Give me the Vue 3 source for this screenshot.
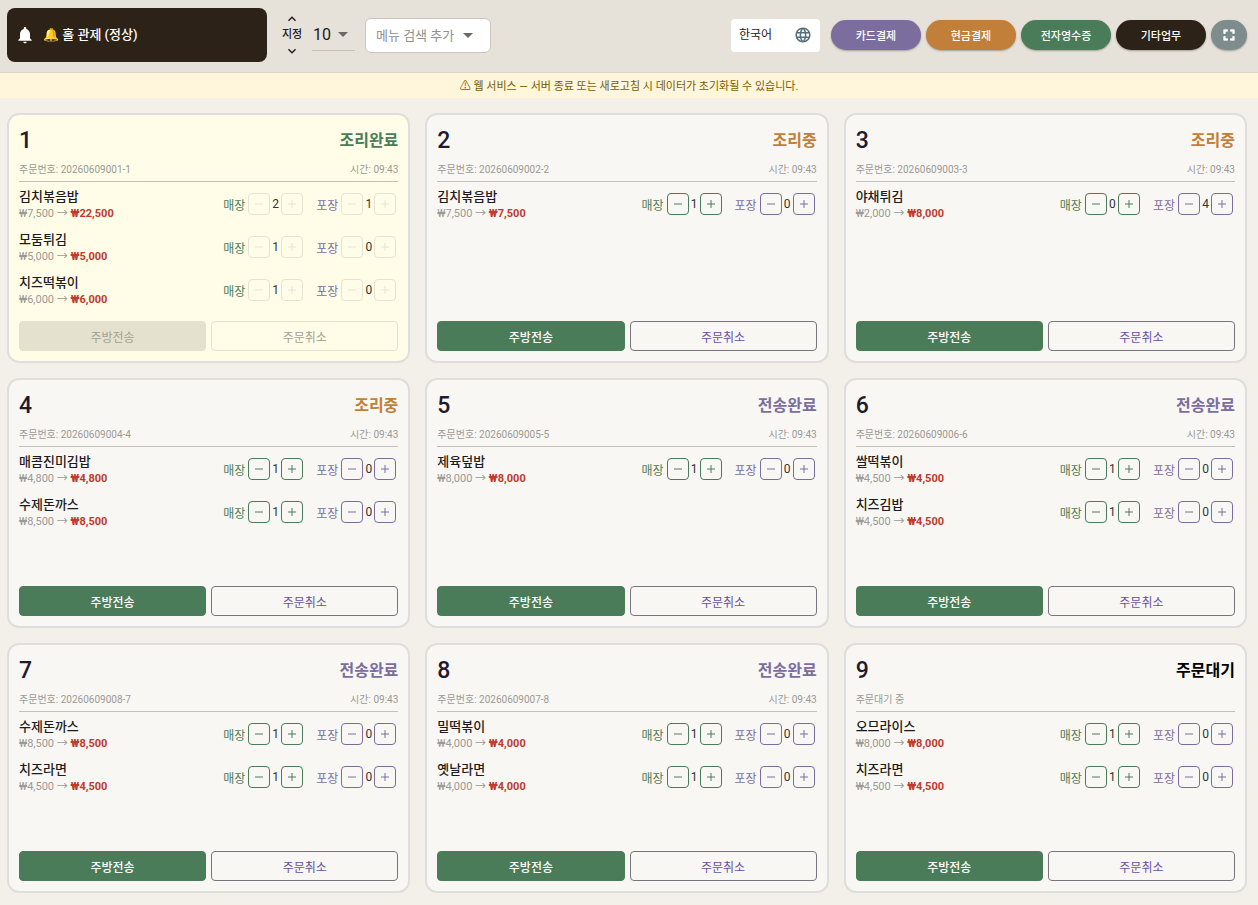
<template>
    <div class="hall-page">
        <header class="top-bar">
            <div class="hall-status">
                <svg class="bell" viewBox="0 0 24 24" aria-hidden="true">
                    <path d="M12 22c1.1 0 2-.9 2-2h-4c0 1.100.9 2 2 2zm6-6v-5c0-3.070-1.640-5.640-4.500-6.320V4c0-.830-.670-1.500-1.500-1.500s-1.500.670-1.500 1.500v.680C7.630 5.360 6 7.920 6 11v5l-2 2v1h16v-1l-2-2z" />
                </svg>
                <h1>🔔 홀 관제 (정상)</h1>
            </div>
            <div class="slot-control">
                <button type="button" aria-label="늘리기" @click="moveSlot(1)">
                    <svg viewBox="0 0 24 24"><path d="M12 8l-6 6 1.410 1.410L12 10.830l4.590 4.580L18 14z" /></svg>
                </button>
                <label for="slotCount">지정</label>
                <button type="button" aria-label="줄이기" @click="moveSlot(-1)">
                    <svg viewBox="0 0 24 24"><path d="M16.590 8.590L12 13.170 7.410 8.590 6 10l6 6 6-6z" /></svg>
                </button>
            </div>
            <div class="select-box slot-select">
                <select id="slotCount" v-model.number="slotCount">
                    <option v-for="n in 20" :key="n" :value="n">{{ n }}</option>
                </select>
                <svg class="caret" viewBox="0 0 10 5"><path d="M0 0h10L5 5z" /></svg>
            </div>
            <div class="select-box menu-select">
                <select v-model="selectedMenu" aria-label="메뉴 검색 추가">
                    <option value="">메뉴 검색 추가</option>
                    <option v-for="name in menuNames" :key="name" :value="name">{{ name }}</option>
                </select>
                <svg class="caret" viewBox="0 0 10 5"><path d="M0 0h10L5 5z" /></svg>
            </div>
            <div class="actions">
                <div class="select-box lang-select">
                    <select v-model="language" aria-label="한국어">
                        <option value="ko">한국어</option>
                        <option value="en">English</option>
                    </select>
                    <svg class="globe" viewBox="0 0 24 24">
                        <path d="M11.990 2C6.470 2 2 6.480 2 12s4.470 10 9.990 10C17.520 22 22 17.520 22 12S17.520 2 11.990 2zm6.930 6h-2.950c-.320-1.250-.780-2.450-1.380-3.560 1.840.630 3.370 1.910 4.330 3.560zM12 4.040c.830 1.200 1.480 2.530 1.910 3.960h-3.820c.430-1.430 1.080-2.760 1.910-3.960zM4.260 14C4.100 13.360 4 12.690 4 12s.100-1.360.260-2h3.380c-.080.660-.140 1.320-.140 2s.060 1.340.140 2H4.260zm.820 2h2.950c.320 1.250.780 2.450 1.380 3.560-1.840-.630-3.370-1.900-4.330-3.560zm2.950-8H5.080c.960-1.660 2.490-2.930 4.330-3.560C8.810 5.550 8.350 6.750 8.030 8zM12 19.960c-.830-1.200-1.480-2.530-1.910-3.960h3.820c-.430 1.430-1.080 2.760-1.910 3.960zM14.340 14H9.660c-.090-.660-.160-1.320-.160-2s.070-1.350.160-2h4.680c.090.650.160 1.320.160 2s-.070 1.340-.160 2zm.250 5.560c.600-1.110 1.060-2.310 1.380-3.560h2.950c-.960 1.650-2.490 2.930-4.330 3.560zM16.360 14c.080-.660.140-1.320.140-2s-.060-1.340-.140-2h3.380c.160.640.260 1.310.260 2s-.100 1.360-.260 2h-3.380z" />
                    </svg>
                </div>
                <button type="button" class="pill card-pay">카드결제</button>
                <button type="button" class="pill cash-pay">현금결제</button>
                <button type="button" class="pill receipt">전자영수증</button>
                <button type="button" class="pill etc">기타업무</button>
                <button type="button" class="pill full" aria-label="전체 화면">
                    <svg viewBox="0 0 24 24">
                        <path d="M7 14H5v5h5v-2H7v-3zm-2-4h2V7h3V5H5v5zm12 7h-3v2h5v-5h-2v3zM14 5v2h3v3h2V5h-5z" />
                    </svg>
                </button>
            </div>
        </header>

        <p class="notice">⚠ 웹 서비스 — 서버 종료 또는 새로고침 시 데이터가 초기화될 수 있습니다.</p>

        <main class="order-grid">
            <section v-for="order in orders" :key="order.id" class="order-card" :class="order.status">
                <div class="card-title">
                    <h2>{{ order.id }}</h2>
                    <strong class="status">{{ statusText[order.status] }}</strong>
                </div>
                <div class="card-info">
                    <span>{{ order.no ? '주문번호: ' + order.no : '주문대기 중' }}</span>
                    <span v-if="order.no">시간: 09:43</span>
                </div>
                <ul class="item-list">
                    <li v-for="item in order.items" :key="item.name">
                        <div class="item-text">
                            <div class="item-name">{{ item.name }}</div>
                            <div class="item-price">
                                {{ won(item.price) }} → <b>{{ won(item.price * (item.hall + item.pack)) }}</b>
                            </div>
                        </div>
                        <div v-for="kind in kinds" :key="kind.key" class="counter" :class="kind.key">
                            <span class="counter-label">{{ kind.label }}</span>
                            <button
                                type="button"
                                :aria-label="kind.label + ' 빼기'"
                                :disabled="order.status === 'done'"
                                @click="change(item, kind.key, -1)"
                            >
                                <svg viewBox="0 0 12 12"><path d="M2 6h8" /></svg>
                            </button>
                            <span class="count">{{ item[kind.key] }}</span>
                            <button
                                type="button"
                                :aria-label="kind.label + ' 더하기'"
                                :disabled="order.status === 'done'"
                                @click="change(item, kind.key, 1)"
                            >
                                <svg viewBox="0 0 12 12"><path d="M2 6h8M6 2v8" /></svg>
                            </button>
                        </div>
                    </li>
                </ul>
                <div class="card-buttons">
                    <button type="button" class="send" :disabled="order.status === 'done'">주방전송</button>
                    <button type="button" class="cancel" :disabled="order.status === 'done'">주문취소</button>
                </div>
            </section>
        </main>
    </div>
</template>

<script setup>
import { ref, computed } from 'vue';

const slotCount = ref(10);
const selectedMenu = ref('');
const language = ref('ko');

const statusText = {
    done: '조리완료',
    cooking: '조리중',
    sent: '전송완료',
    waiting: '주문대기',
};

const kinds = [
    { key: 'hall', label: '매장' },
    { key: 'pack', label: '포장' },
];

const makeItem = (name, price, hall = 1, pack = 0) => ({ name, price, hall, pack });

const orders = ref([
    {
        id: 1,
        no: '20260609001-1',
        status: 'done',
        items: [makeItem('김치볶음밥', 7500, 2, 1), makeItem('모둠튀김', 5000), makeItem('치즈떡볶이', 6000)],
    },
    { id: 2, no: '20260609002-2', status: 'cooking', items: [makeItem('김치볶음밥', 7500)] },
    { id: 3, no: '20260609003-3', status: 'cooking', items: [makeItem('야채튀김', 2000, 0, 4)] },
    {
        id: 4,
        no: '20260609004-4',
        status: 'cooking',
        items: [makeItem('매콤진미김밥', 4800), makeItem('수제돈까스', 8500)],
    },
    { id: 5, no: '20260609005-5', status: 'sent', items: [makeItem('제육덮밥', 8000)] },
    { id: 6, no: '20260609006-6', status: 'sent', items: [makeItem('쌀떡볶이', 4500), makeItem('치즈김밥', 4500)] },
    { id: 7, no: '20260609008-7', status: 'sent', items: [makeItem('수제돈까스', 8500), makeItem('치즈라면', 4500)] },
    { id: 8, no: '20260609007-8', status: 'sent', items: [makeItem('밀떡볶이', 4000), makeItem('옛날라면', 4000)] },
    { id: 9, no: '', status: 'waiting', items: [makeItem('오므라이스', 8000), makeItem('치즈라면', 4500)] },
]);

const menuNames = computed(() => [...new Set(orders.value.flatMap((order) => order.items.map((item) => item.name)))]);

const won = (value) => '₩' + value.toLocaleString('en-US');

const change = (item, key, step) => {
    item[key] = Math.max(0, item[key] + step);
};

const moveSlot = (step) => {
    slotCount.value = Math.min(20, Math.max(1, slotCount.value + step));
};
</script>

<style>
body {
    margin: 0;
    background: #f3f0e9;
}
</style>

<style scoped>
.hall-page {
    min-height: 100vh;
    font-family: Roboto, 'Noto Sans CJK KR', sans-serif;
    color: #1d1b20;
}

h1,
h2,
p,
ul {
    margin: 0;
    padding: 0;
}

button,
select {
    font-family: inherit;
    cursor: pointer;
}

button {
    padding: 0;
    display: flex;
    align-items: center;
    justify-content: center;
}

button:disabled {
    cursor: default;
}

/* 상단 바 */
.top-bar {
    display: flex;
    align-items: center;
    padding: 8px 11px 10px 7px;
    background: #e6e2d9;
    border-bottom: 1px solid #dcd5c8;
}

.hall-status {
    box-sizing: border-box;
    width: 260px;
    height: 54px;
    padding: 0 8px;
    display: flex;
    align-items: center;
    gap: 8px;
    background: #2c2218;
    border-radius: 8px;
    color: #fff;
}

.bell {
    width: 20px;
    height: 20px;
    fill: #fff;
}

.hall-status h1 {
    font-size: 13px;
    line-height: 20px;
    font-weight: 500;
}

.slot-control {
    width: 24px;
    margin-left: 13px;
    display: flex;
    flex-direction: column;
    align-items: center;
}

.slot-control button {
    width: 24px;
    height: 16px;
    border: none;
    background: none;
}

.slot-control svg {
    width: 16px;
    height: 16px;
    fill: #1d1b20;
}

.slot-control label {
    font-size: 11px;
    line-height: 16px;
    font-weight: 500;
    white-space: nowrap;
}

.select-box {
    position: relative;
    box-sizing: border-box;
}

.select-box select {
    appearance: none;
    box-sizing: border-box;
    width: 100%;
    height: 100%;
    margin: 0;
    padding: 0;
    border: none;
    background: transparent;
    color: #1d1b20;
    outline: none;
}

.select-box svg {
    position: absolute;
    top: 0;
    bottom: 0;
    margin: auto 0;
    pointer-events: none;
}

.caret {
    width: 10px;
    height: 5px;
    fill: #6b6963;
}

.slot-select {
    width: 43px;
    height: 32px;
    margin-left: 8px;
    border-bottom: 1px solid #c6c2bb;
}

.slot-select select {
    padding-left: 1px;
    font-size: 16px;
}

.slot-select .caret {
    right: 7px;
}

.menu-select {
    width: 126px;
    height: 35px;
    margin-left: 10px;
    background: #fff;
    border: 1px solid #c9c5bc;
    border-radius: 6px;
}

.menu-select select {
    padding-left: 10px;
    font-size: 13px;
    color: #8f8f8f;
}

.menu-select .caret {
    right: 17px;
}

.actions {
    margin-left: auto;
    display: flex;
    align-items: center;
    gap: 5px;
}

.lang-select {
    width: 89px;
    height: 33px;
    margin-right: 6px;
    background: #fff;
    border-radius: 4px;
}

.lang-select select {
    padding-left: 8px;
    font-size: 12px;
}

.globe {
    right: 8px;
    width: 18px;
    height: 18px;
    fill: #546e7a;
}

.pill {
    width: 90px;
    height: 30px;
    border: none;
    border-radius: 15px;
    box-shadow: 0 1px 2px rgba(0, 0, 0, 0.3);
    color: #fff;
    font-size: 11px;
    font-weight: 500;
}

.card-pay {
    background: #7b6e9e;
}

.cash-pay {
    background: #c17f3a;
}

.receipt {
    background: #4a7c59;
}

.etc {
    background: #2c2218;
}

.full {
    width: 36px;
    background: #7f8c8d;
}

.full svg {
    width: 18px;
    height: 18px;
    fill: #fff;
    stroke: #fff;
}

.notice {
    padding: 5px 16px 3px;
    background: #fff6db;
    color: #7a5c00;
    font-size: 11px;
    line-height: 17px;
    text-align: center;
}

/* 주문 카드 */
.order-grid {
    display: grid;
    grid-template-columns: repeat(3, 1fr);
    gap: 15px;
    padding: 15px 11px 12px 7px;
}

.order-card {
    box-sizing: border-box;
    min-height: 250px;
    padding: 10px;
    display: flex;
    flex-direction: column;
    background: #f9f7f3;
    border: 2px solid #dfdedc;
    border-radius: 12px;
}

.order-card.done {
    background: #fffde7;
}

.card-title {
    display: flex;
    justify-content: space-between;
    align-items: center;
    height: 32px;
}

.card-title h2 {
    font-size: 23px;
    font-weight: 500;
    line-height: 32px;
    color: #1f1a2e;
}

.status {
    font-size: 16px;
    line-height: 30px;
    font-weight: 700;
    color: #000;
}

.done .status {
    color: #4a7c59;
}

.cooking .status {
    color: #c17f3a;
}

.sent .status {
    color: #7b6e9e;
}

.card-info {
    display: flex;
    justify-content: space-between;
    padding: 5px 0 3px;
    border-bottom: 1px solid #c3c1be;
    font-size: 10px;
    line-height: 16px;
    color: #9a9a96;
}

.item-list {
    flex: 1;
    padding-top: 5px;
    list-style: none;
}

.item-list li {
    display: flex;
    align-items: center;
    gap: 13px;
    height: 34px;
    margin-bottom: 9px;
    padding-right: 2px;
}

.item-text {
    flex: 1;
}

.item-name {
    font-size: 13px;
    line-height: 20px;
    font-weight: 500;
}

.item-price {
    font-size: 11px;
    line-height: 14px;
    color: #9a9a96;
}

.item-price b {
    color: #c0392b;
}

.counter {
    display: flex;
    align-items: center;
}

.counter-label {
    margin-right: 3px;
    font-size: 12px;
}

.counter button {
    width: 22px;
    height: 22px;
    border: 1px solid currentColor;
    border-radius: 4px;
    background: none;
    color: inherit;
}

.counter svg {
    width: 12px;
    height: 12px;
    fill: none;
    stroke: currentColor;
}

.counter button:disabled {
    color: #e6e3d5;
}

.hall {
    color: #4a7c59;
}

.pack {
    color: #7b6e9e;
}

.count {
    width: 11px;
    font-size: 12px;
    text-align: center;
    color: #333;
}

.card-buttons {
    display: flex;
    gap: 5px;
}

.card-buttons button {
    flex: 1;
    box-sizing: border-box;
    height: 30px;
    border: 1px solid transparent;
    border-radius: 4px;
    font-size: 12px;
}

.card-buttons .send {
    background: #4a7c59;
    border-color: #4a7c59;
    color: #fff;
    font-weight: 500;
}

.card-buttons .cancel {
    background: none;
    border-color: #79747e;
    color: #6750a4;
}

.card-buttons .send:disabled {
    background: #e4e1cf;
    border-color: #e4e1cf;
    color: #a3a192;
    font-weight: 400;
}

.card-buttons .cancel:disabled {
    border-color: #e4e1cf;
    color: #a3a192;
}
</style>
